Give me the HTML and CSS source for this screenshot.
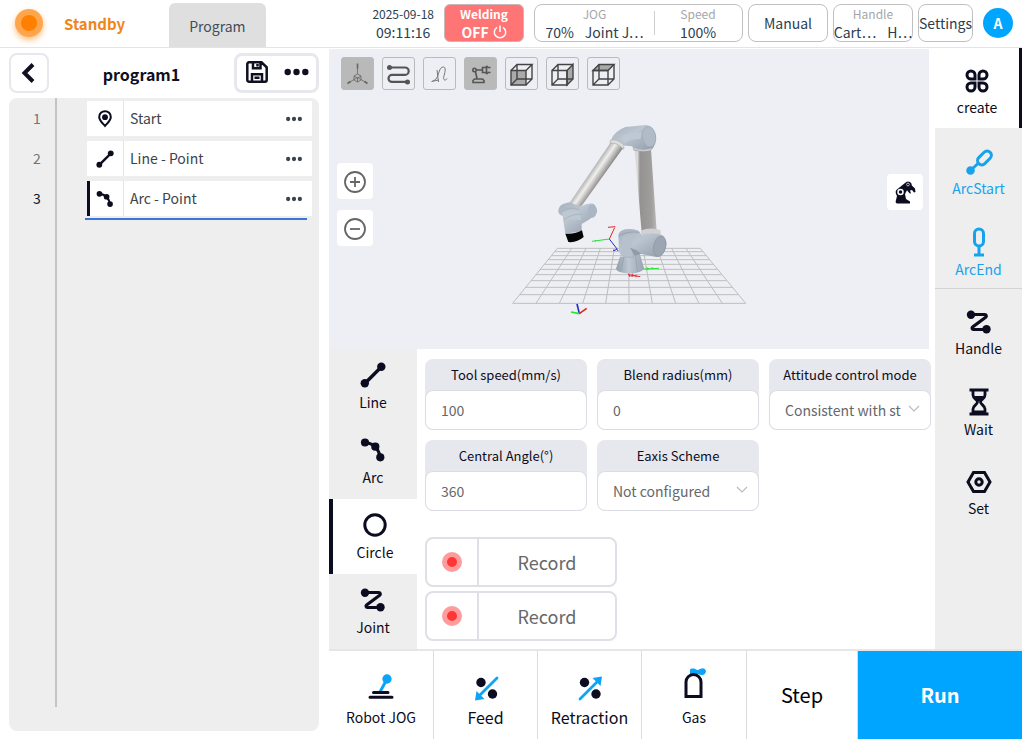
FILE: index.html
```html
<!DOCTYPE html>
<html lang="en">
<head>
  <meta charset="UTF-8">
  <title>Robot Program</title>
  <link rel="stylesheet" href="styles.css">
</head>
<body>
  <!-- shared icons -->
  <svg class="sprite" aria-hidden="true">
    <symbol id="i-line" viewBox="0 0 26 26">
      <path d="M4.8 21.5L21.5 4.8" stroke="currentColor" stroke-width="3.4"/>
      <circle cx="21.3" cy="4.8" r="4.2"/><circle cx="4.8" cy="21.3" r="4.2"/>
    </symbol>
    <symbol id="i-arc" viewBox="0 0 26 26">
      <path d="M5 5.5Q17.5 6.5 20.3 20.3" fill="none" stroke="currentColor" stroke-width="3.2"/>
      <circle cx="5" cy="5.5" r="4.1"/><circle cx="15.3" cy="9.7" r="4.1"/><circle cx="20.3" cy="20.3" r="4.1"/>
    </symbol>
    <symbol id="i-zigzag" viewBox="0 0 26 26">
      <path d="M5 5.5H18.8a1.5 1.5 0 0 1 .9 2.7L6.6 18a1.4 1.4 0 0 0 .8 2.5H20" fill="none" stroke="currentColor" stroke-width="3.2"/>
      <circle cx="5" cy="5.8" r="4.2"/><circle cx="20.5" cy="20.2" r="4.2"/>
    </symbol>
    <symbol id="i-dots" viewBox="0 0 24 8">
      <circle cx="3.2" cy="4" r="3.2"/><circle cx="12" cy="4" r="3.2"/><circle cx="20.8" cy="4" r="3.2"/>
    </symbol>
    <symbol id="i-down" viewBox="0 0 12 8">
      <path d="M1 1l5 5 5-5" fill="none" stroke="currentColor" stroke-width="1.1"/>
    </symbol>
  </svg>

  <header class="topbar">
    <span class="lamp"></span>
    <strong class="state">Standby</strong>
    <a class="page-tab" href="#">Program</a>
    <div class="clock">
      <span class="small">2025-09-18</span>
      <span>09:11:16</span>
    </div>
    <button class="weld">
      <span class="small">Welding</span>
      <span class="weld-off">OFF
        <svg width="14" height="14" viewBox="0 0 14 14" fill="none" stroke="currentColor" stroke-width="1.5"><path d="M4 2.3a5.7 5.7 0 1 0 6 0M7 .5v6.5"/></svg>
      </span>
    </button>
    <button class="box jog">
      <span class="jog-part">
        <span class="caption">JOG</span>
        <span class="pair"><span>70%</span><span>Joint J⋯</span></span>
      </span>
      <span class="jog-part speed">
        <span class="caption">Speed</span>
        <span>100%</span>
      </span>
    </button>
    <button class="box manual">Manual</button>
    <button class="box handle">
      <span class="caption">Handle</span>
      <span class="pair"><span>Cart⋯</span><span>H⋯</span></span>
    </button>
    <button class="box settings">Settings</button>
    <button class="avatar">A</button>
  </header>

  <main class="layout">
    <section class="program">
      <div class="program-head">
        <button class="back" aria-label="Back">
          <svg width="14" height="20" viewBox="0 0 14 20" fill="none" stroke="currentColor" stroke-width="4"><path d="M12 1.5L3.5 10l8.5 8.5"/></svg>
        </button>
        <h1>program1</h1>
        <div class="file-tools">
          <button aria-label="Save">
            <svg width="22" height="22" viewBox="0 0 22 22" fill="none" stroke="currentColor" stroke-width="2.5"><path d="M3 1.3h12.5l5.2 5V19a1.7 1.7 0 0 1-1.7 1.7H3A1.7 1.7 0 0 1 1.3 19V3A1.7 1.7 0 0 1 3 1.3zM7 1.5v5.7h7.5V1.5M6 20.5v-7.3h10v7.3M11.5 3v2.5M8.5 16.7h5"/></svg>
          </button>
          <button aria-label="More"><svg width="25" height="8"><use href="#i-dots"/></svg></button>
        </div>
      </div>
      <div class="listing">
        <ol class="steps">
          <li>
            <span class="num">1</span>
            <div class="step">
              <span class="step-icon"><svg width="16" height="18" viewBox="0 0 16 18"><path d="M8 1.2a5.7 5.7 0 0 1 5.8 5.7C13.8 10.5 10 13.5 8 16 6 13.5 2.2 10.5 2.2 6.9A5.7 5.7 0 0 1 8 1.2z" fill="none" stroke="currentColor" stroke-width="2"/><circle cx="8" cy="7.2" r="2.9"/></svg></span>
              <span class="step-name">Start</span>
              <button aria-label="Start options"><svg width="16" height="6"><use href="#i-dots"/></svg></button>
            </div>
          </li>
          <li>
            <span class="num">2</span>
            <div class="step">
              <span class="step-icon"><svg width="18" height="18"><use href="#i-line"/></svg></span>
              <span class="step-name">Line - Point</span>
              <button aria-label="Line options"><svg width="16" height="6"><use href="#i-dots"/></svg></button>
            </div>
          </li>
          <li class="current">
            <span class="num">3</span>
            <div class="step">
              <span class="step-icon"><svg width="18" height="18"><use href="#i-arc"/></svg></span>
              <span class="step-name">Arc - Point</span>
              <button aria-label="Arc options"><svg width="16" height="6"><use href="#i-dots"/></svg></button>
            </div>
          </li>
        </ol>
      </div>
    </section>

    <section class="work">
      <div class="center">
        <div class="view">
          <svg class="scene" viewBox="-513 -183 1800 900" role="img" aria-label="Robot arm">
            <defs>
              <linearGradient id="tube" x1="0" x2="1" y1="0" y2="0"><stop offset="0" stop-color="#d9d7d5"/><stop offset=".13" stop-color="#dcdad8"/><stop offset=".24" stop-color="#949291"/><stop offset=".75" stop-color="#a09e9c"/><stop offset="1" stop-color="#bbb9b7"/></linearGradient>
              <linearGradient id="tube2" gradientUnits="userSpaceOnUse" x1="272" y1="178" x2="307" y2="202"><stop offset="0" stop-color="#a3a3a3"/><stop offset=".45" stop-color="#f0efee"/><stop offset="1" stop-color="#8d8b8a"/></linearGradient>
              <linearGradient id="shell" x1="0" x2="1" y1="0" y2="1"><stop offset="0" stop-color="#a7b1bd"/><stop offset=".4" stop-color="#bcc6d1"/><stop offset="1" stop-color="#8f99a6"/></linearGradient>
              <linearGradient id="post" x1="0" x2="1" y1="0" y2="0"><stop offset="0" stop-color="#929daa"/><stop offset=".45" stop-color="#bdc8d3"/><stop offset="1" stop-color="#99a4b0"/></linearGradient>
            </defs>
            <!-- floor grid -->
            <g fill="none" stroke="#bdbebf" stroke-width="3">
              <path d="M172 415H601M164 425H609M154 437H619M144 449H629M132 463H640M120 478H652M107 494H665M93 512H680M77 532H697M59 554H715M38 580H737"/>
              <path d="M172 415L38 580M215 415L108 580M258 415L178 580M301 415L248 580M343 415L317 580M386 415L387 580M429 415L457 580M472 415L527 580M515 415L597 580M558 415L667 580M601 415L737 580"/>
            </g>
            <!-- base -->
            <path d="M360 440L348 476Q349 488 390 491Q430 488 432 474L420 434z" fill="url(#post)"/>
            <path d="M372 440L362 484M407 440L413 486" stroke="#98a4b1" stroke-width="3"/>
            <!-- upper arm -->
            <path d="M404 119L453 117L470 364L425 368z" fill="url(#tube)"/>
            <path d="M424 361Q450 350 481 360L483 374Q450 381 422 373z" fill="#cfd1d3"/>
            <!-- shoulder -->
            <path d="M355 374Q359 357 389 357Q416 357 420 368L424 374Q462 366 488 376Q503 391 498 412Q492 438 469 441L421 431Q418 444 388 444Q359 441 357 424z" fill="url(#shell)"/>
            <path d="M366 385Q373 372 397 375V440Q368 440 361 425z" fill="#b6c1cc"/>
            <path d="M356 378Q382 362 418 367" fill="none" stroke="#8a95a2" stroke-width="2"/>
            <ellipse cx="479" cy="409" rx="18" ry="31" transform="rotate(12 479 409)" fill="#9ba6b2" stroke="#8a95a2" stroke-width="2"/>
            <path d="M390 413Q410 418 424 431L404 437z" fill="#8f9ba8"/>
            <!-- forearm -->
            <path d="M337 90L371 112L245 287Q220 292 209 278z" fill="url(#tube2)"/>
            <!-- elbow -->
            <path d="M333 90Q342 64 376 51L438 45Q463 48 468 77Q469 103 455 119Q426 129 400 121L397 109L376 107Q350 88 333 90z" fill="url(#shell)"/>
            <path d="M365 78Q400 63 426 69L420 87Q391 86 370 101z" fill="#bfc9d3"/>
            <ellipse cx="447" cy="80" rx="20" ry="31" transform="rotate(-10 447 80)" fill="#b0bbc7" stroke="#9ca7b4" stroke-width="2"/>
            <path d="M331 91Q350 84 372 105L371 118Q350 96 330 100z" fill="#dddddc" stroke="#a8abae" stroke-width="2"/>
            <path d="M400 115Q426 127 455 117" fill="none" stroke="#c8cdd2" stroke-width="4"/>
            <!-- wrist -->
            <path d="M175 300Q177 282 202 278Q212 274 220 282L244 289Q262 278 280 281Q292 291 291 306Q286 320 245 342V364L196 371L188 318Q173 314 175 300z" fill="url(#shell)"/>
            <path d="M186 308Q213 292 241 308L243 330L192 328z" fill="#bdc8d3"/>
            <path d="M191 329Q223 308 246 314M182 306Q210 286 240 300" fill="none" stroke="#a0acb8" stroke-width="2"/>
            <ellipse cx="277" cy="303" rx="13" ry="20" fill="#aab6c3"/>
            <path d="M196 371Q226 373 246 361L251 381Q230 399 205 396z" fill="#050505"/>
            <!-- tool, base and world axes -->
            <g fill="none" stroke-width="3">
              <path d="M328 387L344 353M324 352l22-2" stroke="#dd2727"/><path d="M328 387L276 394M287 390v5" stroke="#27e331"/><path d="M328 387L352 418M339 421h7l3-4 6 6" stroke="#202cc7"/>
              <path d="M430 477L477 475M439 473l8 3-8 4M455 471l5 6" stroke="#27e331"/><path d="M384 494l37 6M386 491l4 10M398 491l-3 8 9-2M408 494v8" stroke="#e22b35"/>
            </g>
            <g fill="none" stroke-width="5">
              <path d="M238 611L231 582" stroke="#202cc7"/><path d="M238 611L260 595" stroke="#dd2727"/><path d="M238 611L213 606" stroke="#27e331"/>
            </g>
          </svg>

          <div class="view-tools">
            <button class="on" aria-label="Axes"><svg width="25" height="25" viewBox="0 0 25 25" fill="none" stroke="#666" stroke-width=".8"><path d="M12.5 3v9M12.5 15.500L4 20.500M12.500 15.500l8.500 5M12.500 12l3.500 2v4l-3.500 2L9 18v-4zM9 14l3.500 2 3.500-2M12.500 16v4"/><path d="M12.500 1.500v5M2.500 21.500l3-2M22.500 21.500l-3-2" stroke-width="1.600"/></svg></button>
            <button aria-label="Trajectory"><svg width="25" height="25" viewBox="0 0 25 25" fill="none" stroke="#555" stroke-width="2.2"><path d="M4 5.5h15a3.7 3.7 0 0 1 0 7.4H6a3.500 3.500 0 0 0 0 7h15"/><circle cx="3.500" cy="5.500" r="1.400" fill="#555"/><circle cx="21.500" cy="19.900" r="1.400" fill="#555"/></svg></button>
            <button aria-label="Path"><svg width="25" height="25" viewBox="0 0 25 25" fill="none" stroke="#777" stroke-width="1"><path d="M5.500 19c4-1 5-4 6.500-9 1-3 2-5 4.500-5 2 0 2 3 1 7-1 3-1.500 6 .5 6 1 0 1.500-.5 2-1.500M10 8l1.500 12M4.500 19.500l7-1.500"/></svg></button>
            <button class="on" aria-label="Robot model"><svg width="25" height="25" viewBox="0 0 25 25" fill="none" stroke="#555" stroke-width="1.600"><path d="M5 20.500v-2l1.500-1.500h8l1.500 1.500v2zM9 16.500L7.500 10M8.500 8h6M14.500 5.500v5h4v-5zM20 4.500h-1.500v7H20M19.500 5.500h3M19.500 10.500h3"/><circle cx="6.500" cy="8" r="1.700"/></svg></button>
            <button aria-label="Front view"><svg width="25" height="25" viewBox="0 0 25 25" fill="none" stroke="#444" stroke-width="1.400"><path d="M2 8.500h15V23H2z" fill="#aaa"/><path d="M2 8.500l6-6h15L17 8.500M23 2.500V17l-6 6M8 2.500V17h15M8 17l-6 6"/></svg></button>
            <button aria-label="Right view"><svg width="25" height="25" viewBox="0 0 25 25" fill="none" stroke="#444" stroke-width="1.400"><path d="M17 8.500l6-6V17l-6 6z" fill="#aaa"/><path d="M2 8.500h15V23H2zM2 8.500l6-6h15M8 2.500V17h15M8 17l-6 6"/></svg></button>
            <button aria-label="Top view"><svg width="25" height="25" viewBox="0 0 25 25" fill="none" stroke="#444" stroke-width="1.400"><path d="M2 8.500l6-6h15l-6 6z" fill="#aaa"/><path d="M2 8.500h15V23H2zM23 2.500V17l-6 6M8 2.500V17h15M8 17l-6 6"/></svg></button>
          </div>
          <div class="zoom-tools">
            <button aria-label="Zoom in"><svg width="24" height="24" viewBox="0 0 24 24" fill="none" stroke="#666" stroke-width="1.800"><circle cx="12" cy="13" r="10"/><path d="M7 13h10M12 8v10"/></svg></button>
            <button aria-label="Zoom out"><svg width="24" height="24" viewBox="0 0 24 24" fill="none" stroke="#666" stroke-width="1.800"><circle cx="12" cy="13" r="10"/><path d="M7 13h10"/></svg></button>
          </div>
          <button class="pose" aria-label="Robot pose">
            <svg width="22" height="24" viewBox="0 0 22 24"><path d="M3 23.500q-2-.5-1-3.500l1-4Q0 11 3.500 9L11 3q2-2.500 5-1 2 1 1.800 3.500L21 8.500l.5 3.500-1.500.5-2-2.500-2 .5 1 3-1.500-.2-2.500-3-2 3.700 1 5 4 2.500v2z"/><circle cx="6.500" cy="12" r="2.500" stroke="#fff" stroke-width="1.500"/><circle cx="14" cy="4.500" r="1.400" fill="none" stroke="#ddd" stroke-width=".8"/></svg>
          </button>
        </div>

        <div class="editor">
          <nav class="moves">
            <button><svg width="26" height="26"><use href="#i-line"/></svg>Line</button>
            <button><svg width="26" height="26"><use href="#i-arc"/></svg>Arc</button>
            <button class="selected"><svg width="26" height="26" viewBox="0 0 26 26"><circle cx="13" cy="13" r="10.2" fill="none" stroke="currentColor" stroke-width="3"/></svg>Circle</button>
            <button><svg width="26" height="26"><use href="#i-zigzag"/></svg>Joint</button>
          </nav>
          <form class="params">
            <div class="fields">
              <div class="field">
                <label for="speed">Tool speed(mm/s)</label>
                <input id="speed" type="text" value="100">
              </div>
              <div class="field">
                <label for="blend">Blend radius(mm)</label>
                <input id="blend" type="text" value="0">
              </div>
              <div class="field">
                <label for="attitude">Attitude control mode</label>
                <div class="picker">
                  <select id="attitude"><option>Consistent with st</option></select>
                  <svg width="12" height="8"><use href="#i-down"/></svg>
                </div>
              </div>
              <div class="field">
                <label for="angle">Central Angle(°)</label>
                <input id="angle" type="text" value="360">
              </div>
              <div class="field">
                <label for="eaxis">Eaxis Scheme</label>
                <div class="picker">
                  <select id="eaxis"><option>Not configured</option></select>
                  <svg width="12" height="8"><use href="#i-down"/></svg>
                </div>
              </div>
            </div>
            <button type="button" class="record"><span class="rec-dot"><i></i></span><span class="rec-text">Record</span></button>
            <button type="button" class="record"><span class="rec-dot"><i></i></span><span class="rec-text">Record</span></button>
          </form>
        </div>
      </div>

      <nav class="side">
        <button class="selected">
          <svg width="26" height="26" viewBox="0 0 26 26" fill="none" stroke="currentColor" stroke-width="3"><path d="M11 11H7A4 4 0 1 1 11 7zM15 11V7a4 4 0 1 1 4 4zM11 15V19A4 4 0 1 1 7 15zM15 15H19a4 4 0 1 1-4 4z"/></svg>
          create
        </button>
        <button class="arc">
          <svg width="28" height="28" viewBox="0 0 28 28" fill="none" stroke="currentColor" stroke-width="3"><rect x="11.5" y="5.7" width="16" height="8.5" rx="4.2" transform="rotate(-45 19.5 10)"/><path d="M5 23l8.500-8"/><circle cx="5.500" cy="22.500" r="2.800" fill="currentColor"/></svg>
          ArcStart
        </button>
        <button class="arc">
          <svg width="28" height="30" viewBox="0 0 28 30" fill="none" stroke="currentColor" stroke-width="3"><rect x="9.5" y="2" width="9" height="17" rx="4.500"/><path d="M14 19v9M9 28h10"/></svg>
          ArcEnd
        </button>
        <hr>
        <button><svg width="26" height="26"><use href="#i-zigzag"/></svg>Handle</button>
        <button>
          <svg width="24" height="28" viewBox="0 0 24 28" fill="none" stroke="currentColor" stroke-width="2.800"><path d="M2.500 2h19M2.500 26h19M6 3v4c0 3.500 4.500 4.500 4.500 7S6 17.500 6 21v4M18 3v4c0 3.500-4.500 4.500-4.500 7s4.500 3.500 4.500 7v4"/><path d="M7 8h10l-5 6zM6 25v-2.500h12V25z" fill="currentColor" stroke="none"/></svg>
          Wait
        </button>
        <button>
          <svg width="26" height="26" viewBox="0 0 26 26" fill="none" stroke="currentColor" stroke-width="3"><path d="M7.500 3.500h11L24 13l-5.500 9.500h-11L2 13z"/><circle cx="13" cy="13" r="3.200"/></svg>
          Set
        </button>
      </nav>

      <footer class="actions">
        <button><svg width="26" height="30" viewBox="0 0 26 30" fill="none" stroke="currentColor" stroke-width="3" stroke-linecap="round"><path d="M12.500 18l6-11" stroke="#0ba4f8"/><circle cx="19" cy="6" r="3.400" fill="#0ba4f8" stroke="#0ba4f8" stroke-width="2.500"/><path d="M5.500 19.500h14.500M2 24.300h22"/></svg>Robot JOG</button>
        <button class="big"><svg width="26" height="28" viewBox="0 0 26 28"><circle cx="8" cy="7.500" r="4.700"/><circle cx="19.500" cy="19" r="4.700"/><path d="M24 3L6 21" stroke="#0ba4f8" stroke-width="2.800" stroke-linecap="round"/><path d="M2 25.500l1.500-9.500 8 8z" fill="#0ba4f8"/></svg>Feed</button>
        <button class="big"><svg width="26" height="28" viewBox="0 0 26 28"><circle cx="7.500" cy="7.500" r="4.700"/><circle cx="19" cy="19" r="4.700"/><path d="M3 24L21 6" stroke="#0ba4f8" stroke-width="2.800" stroke-linecap="round"/><path d="M25 1.500L23.500 11l-8-8z" fill="#0ba4f8"/></svg>Retraction</button>
        <button><svg width="26" height="36" viewBox="0 0 26 36"><path d="M9 9V3q0-1.500 1.500-1.500h3Q16 4 19 2q5-2 6 2-.5 4.500-5 4-3-1.500-5 0z" fill="#0ba4f8"/><path d="M5 29.500V15a7.500 7.500 0 0 1 15 0v14.500z" fill="#fff" stroke="currentColor" stroke-width="3"/></svg>Gas</button>
        <button class="step-run">Step</button>
        <button class="run">Run</button>
      </footer>
    </section>
  </main>
</body>
</html>
```
FILE: styles.css
```css
* {
  box-sizing: border-box;
}
body {
  margin: 0;
  min-height: 100vh;
  display: flex;
  flex-direction: column;
  background: #fff;
  color: #2c3e50;
  font-family: "Noto Sans CJK SC", "Noto Sans", sans-serif;
  font-size: 14px;
  line-height: 20px;
}
button, input, select {
  font: inherit;
  color: inherit;
  margin: 0;
}
button {
  display: flex;
  align-items: center;
  justify-content: center;
  padding: 0;
  border: 0;
  background: none;
}
svg {
  display: block;
  fill: currentColor;
  flex: none;
}
svg[fill="none"] {
  fill: none;
}
.sprite {
  position: absolute;
  width: 0;
  height: 0;
}

/* top bar */
.topbar {
  display: flex;
  align-items: center;
  gap: 5px;
  height: 48px;
  padding: 0 9px 2px 15px;
  border-bottom: 1px solid #e4e4e4;
}
.lamp {
  width: 28px;
  height: 28px;
  border: 6px solid #ffa64d;
  border-radius: 50%;
  background: #ff8000;
  box-shadow: 0 3px 6px #ffc080;
}
.state {
  margin: 2px 39px 0 16px;
  font-size: 15px;
  color: #f08519;
}
.page-tab {
  align-self: flex-end;
  margin-bottom: -2px;
  padding: 13px 20px 11px;
  border-radius: 6px 6px 0 0;
  background: #dfdfdf;
  color: #414d5a;
  text-decoration: none;
}
.clock {
  display: flex;
  flex-direction: column;
  align-items: center;
  margin-left: auto;
  margin-right: 5px;
  line-height: 18px;
}
.small, .caption {
  font-size: 12px;
}
.caption {
  color: #a5a7aa;
}
.weld {
  flex-direction: column;
  width: 80px;
  height: 38px;
  margin-right: 5px;
  border: 1px solid #c9b6b6;
  border-radius: 6px;
  background: #ff7474;
  color: #fff;
  font-weight: bold;
  line-height: 18px;
}
.weld-off {
  display: flex;
  align-items: center;
  gap: 4px;
}
.box {
  height: 38px;
  border: 1px solid #c0c0c0;
  border-radius: 8px;
  background: #fff;
  line-height: 18px;
}
.jog {
  width: 209px;
}
.jog-part {
  display: flex;
  flex-direction: column;
  align-items: center;
  width: 119px;
}
.speed {
  width: 88px;
  background: linear-gradient(#d0d0d0, #d0d0d0) 0 6px / 1px 24px no-repeat;
}
.pair {
  display: flex;
  gap: 11px;
  white-space: nowrap;
}
.manual, .handle {
  width: 80px;
}
.handle {
  flex-direction: column;
}
.settings {
  width: 55px;
}
.avatar {
  width: 30px;
  height: 30px;
  margin-left: 5px;
  border-radius: 50%;
  background: #00a5ff;
  color: #fff;
  font-weight: bold;
}

.layout {
  flex: 1;
  display: grid;
  grid-template-columns: 329px 1fr;
}

/* program list */
.program {
  display: flex;
  flex-direction: column;
  padding: 5px 10px 8px 9px;
  color: #101020;
}
.program-head {
  display: flex;
  align-items: center;
  justify-content: space-between;
  margin-bottom: 5px;
}
.program-head h1 {
  margin: 2px 0 0;
  font-size: 16px;
  line-height: 24px;
}
.back {
  width: 40px;
  height: 40px;
  padding-right: 2px;
  border: 2px solid #e7e8ed;
  border-radius: 8px;
}
.file-tools {
  display: flex;
  align-items: center;
  justify-content: center;
  gap: 16px;
  height: 40px;
  width: 85px;
  padding: 0 0 2px 2px;
  border: 3px solid #e7e8ed;
  border-radius: 8px;
}
.listing {
  flex: 1;
  padding-bottom: 24px;
  border-radius: 8px;
  background: #eee;
  display: flex;
}
.steps {
  flex: 1;
  list-style: none;
  margin: 0;
  padding: 3px 7px 0 0;
  background: linear-gradient(#c4c4c4, #c4c4c4) 46px 0 / 2px 100% no-repeat;
}
.steps li {
  display: flex;
  align-items: center;
  margin-bottom: 5px;
  line-height: 18px;
}
.num {
  width: 56px;
  padding-bottom: 2px;
  text-align: center;
  color: #707478;
}
.current .num {
  color: #101020;
}
.step {
  flex: 1;
  display: flex;
  align-items: center;
  height: 35px;
  margin-left: 22px;
  padding-right: 10px;
  background: #fff;
  color: #3b444c;
}
.step-icon {
  display: flex;
  align-items: center;
  justify-content: center;
  width: 37px;
  height: 100%;
  border-right: 1px solid #e4e4e4;
  color: #0c0c20;
}
.step-name {
  flex: 1;
  padding: 0 0 2px 6px;
}
.current {
  position: relative;
}
.current .step-icon {
  padding-right: 3px;
  border-left: 3px solid #0c0c20;
}
/* insertion line */
.current::after {
  content: "";
  position: absolute;
  left: 76px;
  right: 5px;
  bottom: -4px;
  height: 2px;
  background: #3d73dd;
}

/* work area */
.work {
  display: grid;
  grid-template-columns: 1fr 87px;
  grid-template-rows: 1fr auto;
  color: #0c0c20;
}
.center {
  display: flex;
  flex-direction: column;
}
.view {
  position: relative;
  flex: 1;
  margin: 1px 6px 0 0;
  background: #eeeff4;
}
.scene {
  width: 100%;
}
.view-tools {
  position: absolute;
  top: 8px;
  left: 12px;
  display: flex;
  gap: 8px;
}
.view-tools button {
  width: 33px;
  height: 33px;
  padding-top: 2px;
  border: 1px solid #b9babc;
  border-radius: 3px;
}
.view-tools .on {
  background: #b9b9b9;
}
.zoom-tools {
  position: absolute;
  top: 114px;
  left: 8px;
  display: grid;
  gap: 11px;
}
.zoom-tools button, .pose {
  width: 36px;
  height: 36px;
  border-radius: 4px;
  background: #fff;
}
.pose {
  position: absolute;
  top: 125px;
  right: 6px;
}

.editor {
  display: flex;
}
.moves {
  width: 88px;
  background: #eee;
}
.moves button {
  flex-direction: column;
  gap: 4px;
  width: 100%;
  height: 75px;
}
.moves .selected {
  border-left: 4px solid #0c0c20;
  background: #fff;
}
.params {
  flex: 1;
  padding: 10px 4px 8px 8px;
}
.fields {
  display: grid;
  grid-template-columns: repeat(3, 1fr);
  gap: 10px;
  margin-bottom: 26px;
}
.field {
  border-radius: 8px;
  background: #e7e8ee;
}
.field label {
  display: block;
  height: 31px;
  font-size: 13px;
  line-height: 32px;
  text-align: center;
}
.field input, .field select {
  display: block;
  width: 100%;
  height: 40px;
  padding: 0 15px;
  border: 1px solid #dcdde4;
  border-radius: 8px;
  background: #fff;
  color: #66686c;
}
.field select {
  appearance: none;
  padding-right: 28px;
}
.picker {
  position: relative;
}
.picker svg {
  position: absolute;
  right: 11px;
  top: 15px;
  color: #b8bac0;
  pointer-events: none;
}
.record {
  width: 192px;
  height: 50px;
  margin-bottom: 4px;
  border: 2px solid #dfe0e6;
  border-radius: 8px;
  color: #66686c;
  font-size: 18px;
}
.record:last-child {
  margin-bottom: 0;
}
.rec-dot {
  display: flex;
  align-items: center;
  justify-content: center;
  width: 52px;
  height: 100%;
  border-right: 2px solid #dfe0e6;
}
.rec-dot i {
  width: 20px;
  height: 20px;
  border: 5px solid #ff9b9b;
  border-radius: 50%;
  background: #ff3636;
}
.rec-text {
  flex: 1;
}

/* side menu */
.side {
  background: #eee;
}
.side button {
  flex-direction: column;
  gap: 3px;
  width: 100%;
  height: 80px;
  padding-top: 9px;
}
.side .selected {
  border-right: 3px solid #0c0c20;
  background: #fff;
}
.side .arc {
  color: #16a3ee;
  gap: 2px;
}
.side hr {
  margin: 0;
  border: 0;
  border-top: 1px solid #d3d3d3;
}

/* bottom actions */
.actions {
  grid-column: 1 / -1;
  display: grid;
  grid-template-columns: 105fr 104fr 104fr 105fr 111fr 164fr;
  height: 90px;
  border-top: 2px solid #e6e6e6;
}
.actions button {
  flex-direction: column;
  justify-content: flex-end;
  gap: 4px;
  padding-bottom: 12px;
  border-right: 1px solid #dcdcdc;
}
.actions .big {
  font-size: 16px;
}
.actions .step-run, .actions .run {
  justify-content: center;
  padding: 0;
  font-size: 20px;
  color: #000;
}
.actions .run {
  border: 0;
  background: #00a5ff;
  color: #fff;
  font-weight: bold;
}
```
